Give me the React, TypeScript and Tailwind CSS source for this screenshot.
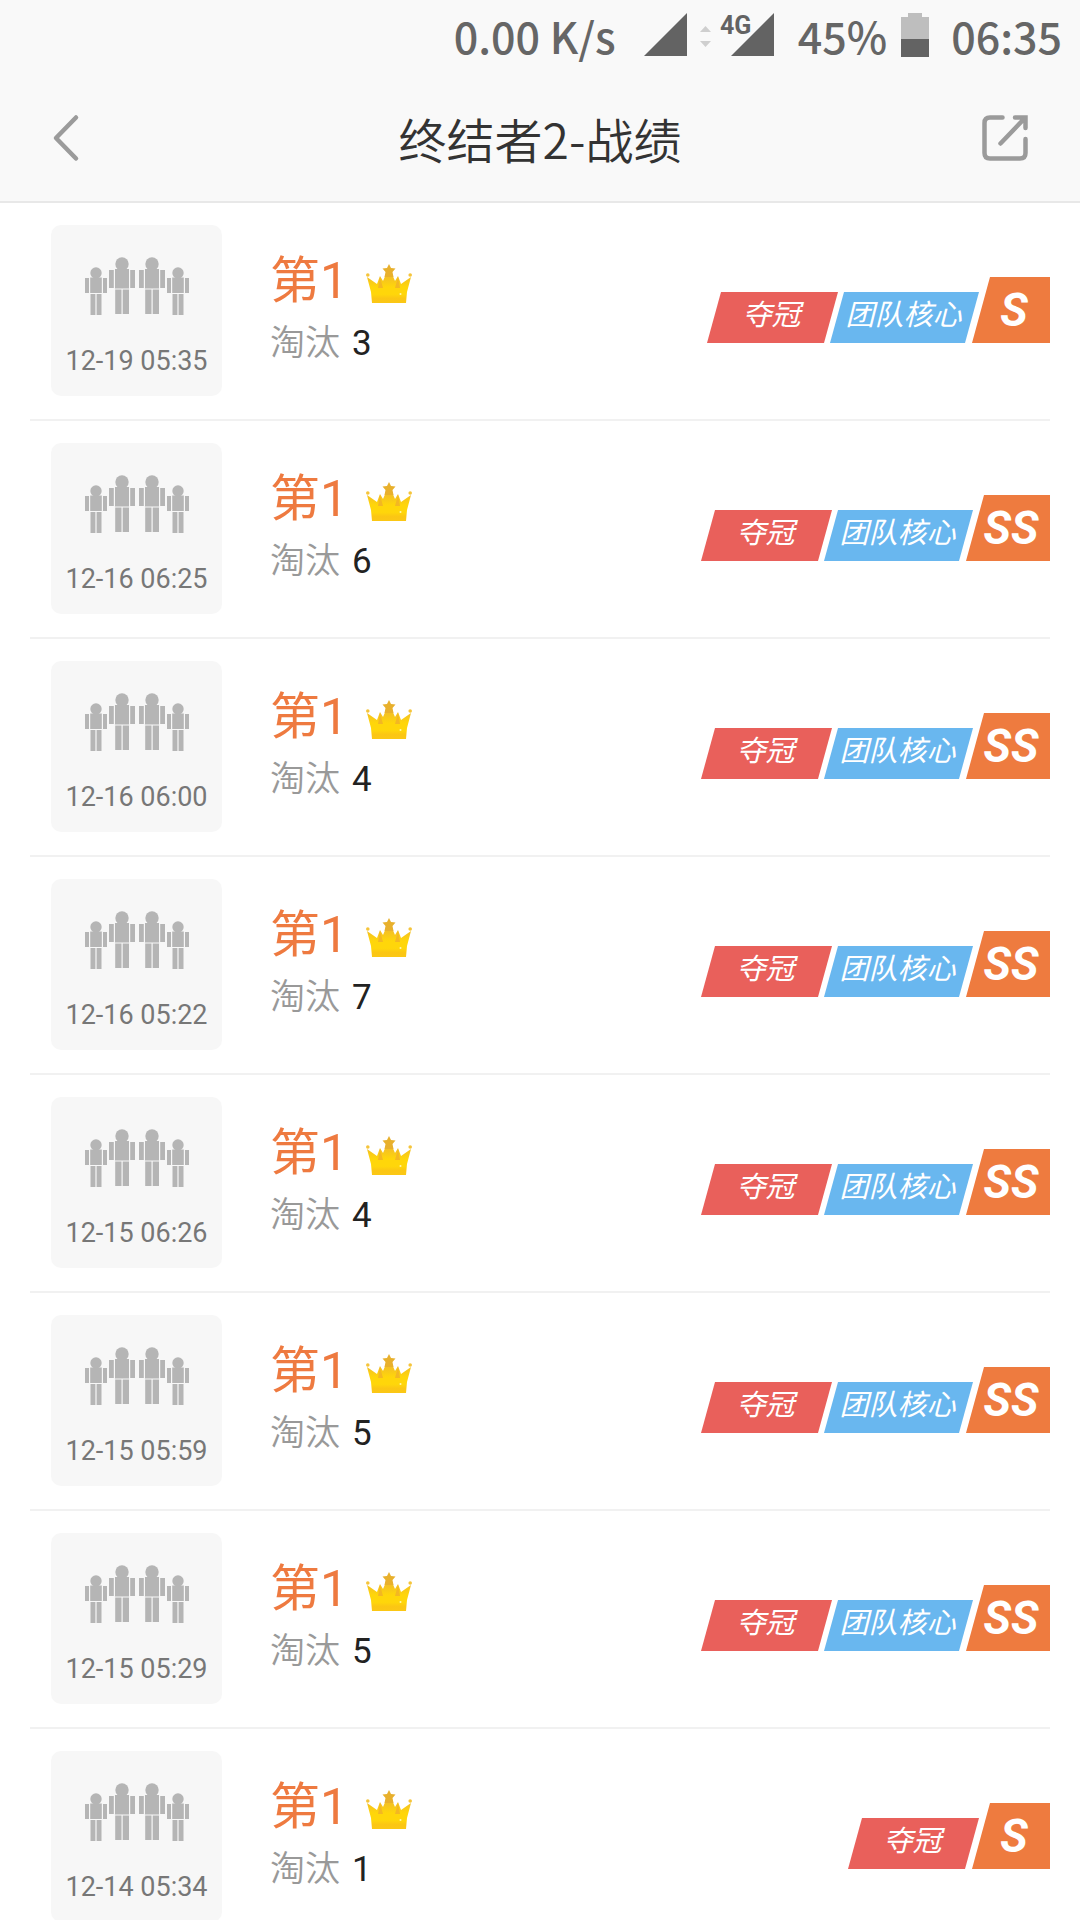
import React from "react";

const SLANT = "[clip-path:polygon(14px_0,100%_0,calc(100%-14px)_100%,0_100%)]";

type Grade = "S" | "SS";

interface Match {
  time: string;
  kills: number;
  grade: Grade;
  core: boolean;
}

const matches: Match[] = [
  { time: "12-19 05:35", kills: 3, grade: "S", core: true },
  { time: "12-16 06:25", kills: 6, grade: "SS", core: true },
  { time: "12-16 06:00", kills: 4, grade: "SS", core: true },
  { time: "12-16 05:22", kills: 7, grade: "SS", core: true },
  { time: "12-15 06:26", kills: 4, grade: "SS", core: true },
  { time: "12-15 05:59", kills: 5, grade: "SS", core: true },
  { time: "12-15 05:29", kills: 5, grade: "SS", core: true },
  { time: "12-14 05:34", kills: 1, grade: "S", core: false },
];

export default function App() {
  return (
    <div className="h-screen overflow-hidden bg-white font-[Roboto,'Noto_Sans_CJK_SC',sans-serif]">
      <StatusBar />
      <Header />
      <ul className="px-[30px]">
        {matches.map((match) => (
          <MatchRow key={match.time} match={match} />
        ))}
      </ul>
    </div>
  );
}

function StatusBar() {
  return (
    <div className="flex h-[70px] items-center justify-end bg-[#f9f9f9] pr-[18px] font-['Noto_Sans_CJK_SC',sans-serif] text-[43px] leading-[70px] font-medium text-[#666]">
      <span>0.00 K/s</span>
      {/* Signal: SIM 1, data arrows, SIM 2 */}
      <svg className="ml-[28px] overflow-visible" width="132" height="46" viewBox="0 0 132 46" fill="#636363">
        <path d="M0 44 43 1V44Z" />
        <path d="M56 20 61.500 14 67 20ZM56 29 61.500 35 67 29Z" fill="#cfcfcf" />
        <path d="M87 44 130 1V44Z" />
        <text x="76" y="22" fontSize="25" fontWeight="700" fontFamily="'Liberation Sans Narrow', Roboto" stroke="#f9f9f9" strokeWidth="3" paintOrder="stroke">4G</text>
      </svg>
      <span className="ml-[22px]">45%</span>
      <svg className="ml-[14px]" width="28" height="44" viewBox="0 0 28 44">
        <path d="M0 4H7V0H21V4H28V44H0Z" fill="#bebebe" />
        <path d="M0 26H28V44H0Z" fill="#636363" />
      </svg>
      <span className="ml-[22px]">06:35</span>
    </div>
  );
}

function Header() {
  return (
    <header className="flex h-[133px] items-center justify-between border-b-2 border-[#e8e8e8] bg-[#f9f9f9] px-[52px] pt-1">
      <button aria-label="返回" className="flex w-12">
        <svg width="28" height="48" viewBox="0 0 28 48" fill="none" stroke="#9b9b9b" strokeWidth="4.500" strokeLinecap="round" strokeLinejoin="round">
          <path d="M24 3.500 4 24 24 44.500" />
        </svg>
      </button>
      <h1 className="font-['Noto_Sans_CJK_SC',sans-serif] text-[48px] leading-[64px] font-[350] text-[#333]">
        终结者2-战绩
      </h1>
      <button aria-label="分享" className="flex w-12 justify-end">
        <svg width="46" height="46" viewBox="0 0 46 46" fill="none" stroke="#9b9b9b" strokeWidth="4.500" strokeLinecap="round">
          <path d="M20.500 2.500H8Q2.500 2.500 2.500 8V38Q2.500 43.500 8 43.500H38Q43.500 43.500 43.500 38V24" />
          <path d="M18.500 28.500 42 4M33 2.500H43.500V13" />
        </svg>
      </button>
    </header>
  );
}

function MatchRow({ match }: { match: Match }) {
  return (
    <li className="flex h-[218px] items-start justify-between border-b-2 border-[#f1f1f1] pt-[22px] pl-[21px]">
      <div className="flex">
        <div className="flex size-[171px] flex-col items-center rounded-[10px] bg-[#f7f7f7] pt-[32px]">
          <SquadIcon />
          <time className="mt-[30px] text-[27px] leading-8 text-[#777]">{match.time}</time>
        </div>
        <div className="ml-[48px] pt-[24px]">
          <div className="flex items-center gap-[18px]">
            <span className="text-[50px] leading-[64px] text-[#ee7a40]">第1</span>
            <Crown />
          </div>
          <p className="flex gap-[12px] text-[35px] leading-[62px] text-[#222]">
            <span className="font-[350] text-[#999]">淘汰</span>
            <span>{match.kills}</span>
          </p>
        </div>
      </div>
      <div className="mt-[52px] flex items-end text-white italic">
        <span className={`h-[51px] w-[131px] bg-[#e9605b] pr-[2px] text-center text-[29px] leading-[46px] ${SLANT}`}>
          夺冠
        </span>
        {match.core && (
          <span className={`ml-[-8px] h-[51px] w-[149px] bg-[#69b7ef] pr-[2px] text-center text-[29px] leading-[46px] ${SLANT}`}>
            团队核心
          </span>
        )}
        <GradeBadge grade={match.grade} />
      </div>
    </li>
  );
}

function GradeBadge({ grade }: { grade: Grade }) {
  return (
    <span
      className={`ml-[-7px] h-[66px] bg-[#ee7b3f] pl-[6px] text-center text-[46px] leading-[66px] font-bold [clip-path:polygon(18px_0,100%_0,100%_100%,0_100%)] ${
        grade === "SS" ? "w-[84px]" : "w-[78px]"
      }`}
    >
      {grade}
    </span>
  );
}

function SquadIcon() {
  return (
    <svg width="106" height="58" viewBox="0 0 106 58" fill="#b5b5b5">
      <circle cx="12" cy="16" r="5.700" />
      <path d="M1 21H5V36H1ZM6.200 20.500H17.800V36H6.200ZM19 21H23V36H19ZM6.500 37H11.400V58H6.500ZM12.600 37H17.500V58H12.600Z" />
      <circle cx="38" cy="7" r="6.700" />
      <path d="M25 13H29.800V31H25ZM31 12H45V31.500H31ZM46.200 13H51V31H46.200ZM31.200 32.500H37.500V57H31.200ZM38.700 32.500H45V57H38.700Z" />
      <circle cx="68" cy="7" r="6.700" />
      <path d="M55 13H59.800V31H55ZM61 12H75V31.500H61ZM76.200 13H81V31H76.200ZM61.200 32.500H67.500V57H61.200ZM68.700 32.500H75V57H68.700Z" />
      <circle cx="94" cy="16" r="5.700" />
      <path d="M83 21H87V36H83ZM88.200 20.500H99.800V36H88.200ZM101 21H105V36H101ZM88.500 37H93.400V58H88.500ZM94.600 37H99.500V58H94.600Z" />
    </svg>
  );
}

function Crown() {
  return (
    <svg className="mt-[6px]" width="46" height="40" viewBox="0 0 46 40">
      <defs>
        <linearGradient id="gold" x1="0" y1="0" x2="0" y2="1">
          <stop offset="0" stopColor="#f0b92c" />
          <stop offset="0.450" stopColor="#ffd60a" />
          <stop offset="0.700" stopColor="#ffd60a" />
          <stop offset="0.850" stopColor="#fbc614" />
          <stop offset="1" stopColor="#fbc815" />
        </linearGradient>
      </defs>
      <path d="M6 39 5 28 1 13 11 20 14 12 17 17 20 10H26L29 17 32 12 35 20 45 13 41 28 40 39Z" fill="url(#gold)" />
      <path d="M12 24 14 13 17 24ZM29 24 32 13 34 24Z" fill="#f3b723" />
      <circle cx="1.800" cy="11" r="1.800" fill="#f5c43a" />
      <circle cx="44.200" cy="11" r="1.800" fill="#f5c43a" />
      <path d="M23 0 25 4 29.500 4.500 26.500 8 27.500 13H18.500L19.500 8 16.500 4.500 21 4Z" fill="#e8b02c" />
      <circle cx="34.500" cy="30" r="1" fill="#fff6b0" />
    </svg>
  );
}
